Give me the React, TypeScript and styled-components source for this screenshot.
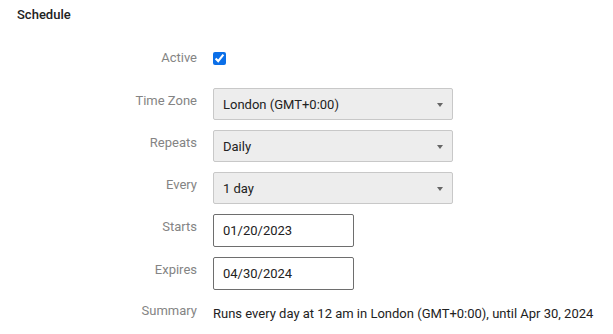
import React from "react";
import styled, { createGlobalStyle } from "styled-components";

const GlobalStyle = createGlobalStyle`
  body {
    margin: 0;
    background: #ffffff;
    font-family: Roboto, "Liberation Sans", sans-serif;
    color: #222222;
  }
`;

const Page = styled.div`
  padding: 7px 17px;
`;

const Title = styled.h3`
  margin: 0;
  font-size: 13px;
  line-height: 15px;
  font-weight: 500;
  color: #222222;
`;

const Form = styled.div`
  margin-top: 21px;
  display: flex;
  flex-direction: column;
  gap: 10px;
`;

const Row = styled.div<{ $height?: number }>`
  display: grid;
  grid-template-columns: 180px 1fr;
  column-gap: 16px;
  align-items: start;
  min-height: ${(p) => p.$height ?? 32}px;
`;

const Label = styled.label<{ $top?: number }>`
  text-align: right;
  font-size: 13px;
  line-height: 15px;
  color: #848484;
  padding-top: ${(p) => p.$top ?? 5}px;
`;

const Check = styled.input`
  margin: 9px 0 0 0;
  width: 13px;
  height: 13px;
  accent-color: #0b6fe8;
`;

const Select = styled.div`
  position: relative;
  box-sizing: border-box;
  width: 240px;
  height: 32px;
  padding: 0 24px 0 9px;
  display: flex;
  align-items: center;
  background: #ededed;
  border: 1px solid #c8c8c8;
  border-radius: 2px;
  font-size: 13px;
  color: #222222;
`;

const Caret = styled.span`
  position: absolute;
  right: 9px;
  top: 14px;
  width: 0;
  height: 0;
  border-left: 3.5px solid transparent;
  border-right: 3.5px solid transparent;
  border-top: 4px solid #666666;
`;

const TextInput = styled.input`
  box-sizing: border-box;
  width: 141px;
  height: 33px;
  margin: 0;
  padding: 0 9px;
  border: 1px solid #6e6e6e;
  border-radius: 2px;
  background: #ffffff;
  font-family: Roboto, "Liberation Sans", sans-serif;
  font-size: 13px;
  color: #222222;
  outline: none;
`;

const Summary = styled.div`
  font-size: 13px;
  line-height: 15px;
  color: #222222;
  padding-top: 6px;
  white-space: nowrap;
`;

const Dropdown: React.FC<{ value: string }> = ({ value }) => (
  <Select>
    {value}
    <Caret />
  </Select>
);

export default function App() {
  return (
    <>
      <GlobalStyle />
      <Page>
        <Title>Schedule</Title>
        <Form>
          <Row $height={35}>
            <Label $top={7}>Active</Label>
            <div>
              <Check type="checkbox" defaultChecked />
            </div>
          </Row>
          <Row>
            <Label>Time Zone</Label>
            <Dropdown value="London (GMT+0:00)" />
          </Row>
          <Row>
            <Label>Repeats</Label>
            <Dropdown value="Daily" />
          </Row>
          <Row>
            <Label>Every</Label>
            <Dropdown value="1 day" />
          </Row>
          <Row>
            <Label>Starts</Label>
            <div>
              <TextInput defaultValue="01/20/2023" />
            </div>
          </Row>
          <Row>
            <Label>Expires</Label>
            <div>
              <TextInput defaultValue="04/30/2024" />
            </div>
          </Row>
          <Row>
            <Label $top={3}>Summary</Label>
            <Summary>
              Runs every day at 12 am in London (GMT+0:00), until Apr 30, 2024
            </Summary>
          </Row>
        </Form>
      </Page>
    </>
  );
}
